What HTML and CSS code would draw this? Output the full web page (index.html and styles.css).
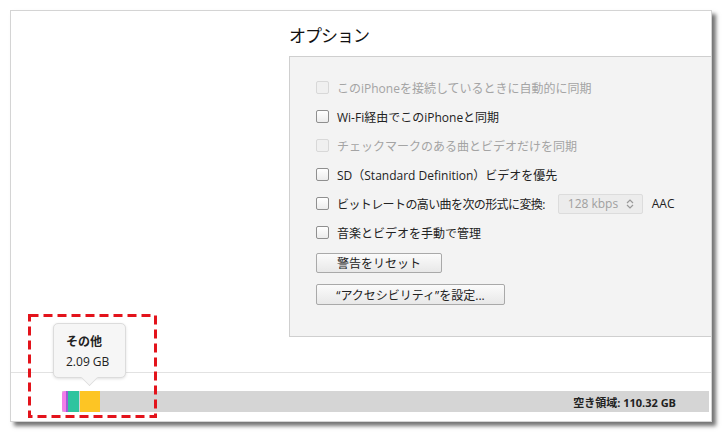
FILE: index.html
```html
<!DOCTYPE html>
<html lang="ja">
<head>
    <meta charset="UTF-8">
    <meta name="viewport" content="width=device-width, initial-scale=1.0">
    <title>オプション</title>
    <link rel="stylesheet" href="styles.css">
</head>
<body>
    <div class="window">
        <div class="content">
            <h2 class="title">オプション</h2>
            <div class="options">
                <label class="row disabled"><span class="check"></span>このiPhoneを接続しているときに自動的に同期</label>
                <label class="row"><span class="check"></span>Wi-Fi経由でこのiPhoneと同期</label>
                <label class="row disabled"><span class="check"></span>チェックマークのある曲とビデオだけを同期</label>
                <label class="row"><span class="check"></span>SD（Standard Definition）ビデオを優先</label>
                <label class="row"><span class="check"></span><span class="tight">ビットレートの高い曲を次の形式に変換:</span>
                    <span class="select">128 kbps
                        <svg class="chevrons" width="8" height="10" viewBox="0 0 8 10">
                            <path d="M1 4 L4 1 L7 4 M1 6 L4 9 L7 6" fill="none" stroke="#999" stroke-width="1.2"/>
                        </svg>
                    </span>
                    <span class="format">AAC</span>
                </label>
                <label class="row"><span class="check"></span>音楽とビデオを手動で管理</label>
                <button class="button reset">警告をリセット</button>
                <button class="button access">“アクセシビリティ”を設定...</button>
            </div>
        </div>
        <div class="separator"></div>
        <div class="storage">
            <div class="bar">
                <span class="seg pink"></span>
                <span class="seg purple"></span>
                <span class="seg teal"></span>
                <span class="seg yellow"></span>
                <span class="free">空き領域: 110.32 GB</span>
            </div>
        </div>

        <div class="tooltip">
            <div class="tip-title">その他</div>
            <div class="tip-size">2.09 GB</div>
        </div>

        <svg class="highlight" width="129" height="104" viewBox="0 0 129 104">
            <rect x="1.5" y="1.5" width="126" height="101" fill="none" stroke="#e3131b" stroke-width="3" stroke-dasharray="9 5"/>
        </svg>
    </div>
</body>
</html>
```

FILE: styles.css
```css
body {
    margin: 0;
    padding: 10px;
    background-color: #fff;
    font-family: "Open Sans", "Noto Sans CJK JP", sans-serif;
    color: #222;
}
.window {
    position: relative;
    box-sizing: border-box;
    width: 702px;
    height: 412px;
    display: flex;
    flex-direction: column;
    background-color: #fff;
    border: 1px solid #d4d4d4;
    box-shadow: 4px 4px 4px rgba(0, 0, 0, 0.55);
}
.content {
    padding-left: 278px;
}
.title {
    box-sizing: border-box;
    height: 45px;
    margin: 0;
    padding-top: 2px;
    display: flex;
    align-items: center;
    font-size: 17px;
    font-weight: normal;
    letter-spacing: -1px;
    color: #111;
}
.options {
    box-sizing: border-box;
    height: 281px;
    padding: 16px 0 0 26px;
    background-color: #f3f3f3;
    border: 1px solid #cfcfcf;
    border-right: none;
    display: flex;
    flex-direction: column;
    align-items: flex-start;
}
.row {
    height: 29px;
    display: flex;
    align-items: center;
    font-size: 12px;
    white-space: nowrap;
}
.tight {
    letter-spacing: -0.6px;
}
.check {
    box-sizing: border-box;
    width: 13px;
    height: 13px;
    margin-right: 8px;
    border: 1px solid #8f8f8f;
    border-radius: 2px;
    background: linear-gradient(#fff, #ececec);
}
.disabled {
    color: #a4a4a4;
}
.disabled .check {
    border-color: #d8d8d8;
    background: #f0f0f0;
}
.select {
    box-sizing: border-box;
    width: 85px;
    height: 20px;
    margin-left: 13px;
    padding: 0 8px 0 9px;
    display: flex;
    align-items: center;
    justify-content: space-between;
    background-color: #ececec;
    border: 1px solid #dcdcdc;
    border-radius: 2px;
    color: #a0a0a0;
}
.format {
    margin-left: 9px;
}
.button {
    box-sizing: border-box;
    padding: 0;
    border: 1px solid #a9a9a9;
    border-radius: 2px;
    background: linear-gradient(#fbfbfb, #e8e8e8);
    font-family: inherit;
    font-size: 12px;
    color: #222;
}
.reset {
    width: 126px;
    height: 20px;
    margin-top: 6px;
}
.access {
    width: 189px;
    height: 21px;
    margin-top: 11px;
}
.separator {
    height: 1px;
    margin-top: 35px;
    background-color: #e2e2e2;
}
.storage {
    padding: 18px 2px 0 51px;
}
.bar {
    height: 21px;
    display: flex;
    align-items: stretch;
    background-color: #d5d5d5;
}
.seg {
    display: block;
}
.pink {
    width: 4px;
    background-color: #f27ee9;
    border-radius: 3px 0 0 3px;
}
.purple {
    width: 2px;
    background-color: #a05ad6;
}
.teal {
    width: 11px;
    background-color: #2ec49f;
}
.yellow {
    width: 20px;
    margin-left: 1px;
    background-color: #fdc524;
}
.free {
    margin-left: auto;
    padding-right: 33px;
    align-self: center;
    font-size: 11px;
    font-weight: bold;
    color: #222;
}
.tooltip {
    position: absolute;
    left: 42px;
    top: 312px;
    box-sizing: border-box;
    width: 73px;
    height: 55px;
    padding: 8px 0 0 12px;
    background-color: #f6f6f6;
    border: 1px solid #dcdcdc;
    border-radius: 5px;
    box-shadow: 0 1px 3px rgba(0, 0, 0, 0.12);
    font-size: 12px;
    line-height: 20px;
}
.tooltip::after {
    content: "";
    position: absolute;
    left: 28px;
    bottom: -8px;
    width: 14px;
    height: 14px;
    background-color: #f6f6f6;
    border-right: 1px solid #dcdcdc;
    border-bottom: 1px solid #dcdcdc;
    transform: rotate(45deg) scale(0.8, 0.8);
}
.tip-title {
    font-weight: bold;
}
.highlight {
    position: absolute;
    left: 17px;
    top: 303px;
}
```
